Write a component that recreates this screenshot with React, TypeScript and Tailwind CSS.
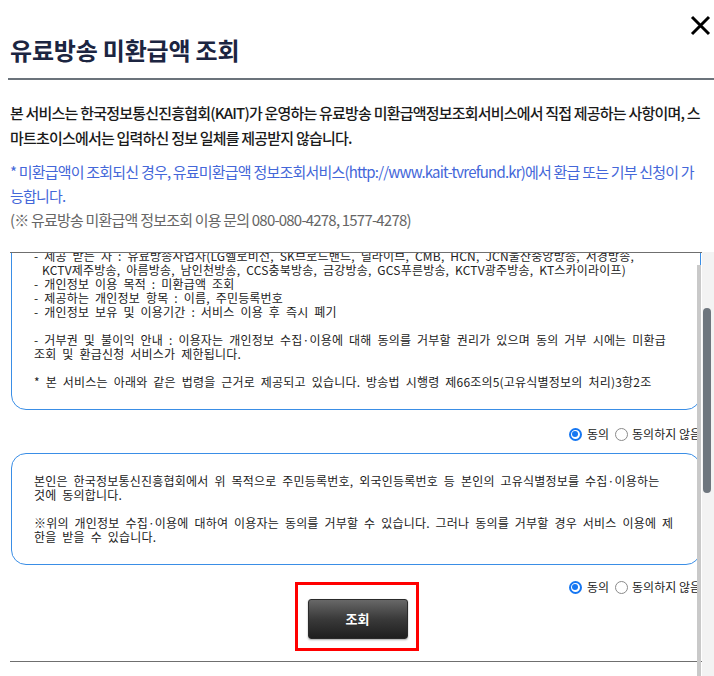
import React from "react";

const FONT = { fontFamily: '"Noto Sans CJK KR", "Noto Sans", sans-serif' };

function Radio({ checked }: { checked: boolean }) {
  if (checked) {
    return (
      <span className="flex h-[13px] w-[13px] shrink-0 items-center justify-center rounded-full border-[2px] border-[#1677f2] bg-white">
        <span className="block h-[6px] w-[6px] rounded-full bg-[#1677f2]" />
      </span>
    );
  }
  return <span className="block h-[13px] w-[13px] shrink-0 rounded-full border border-[#8a8a8a] bg-white" />;
}

function RadioRow() {
  return (
    <div className="flex h-[18px] items-center justify-end pr-[1px] text-[12px] leading-[18px] text-[#222]">
      <Radio checked />
      <span className="ml-[5px]">동의</span>
      <span className="ml-[6px] block">
        <Radio checked={false} />
      </span>
      <span className="ml-[4px]">동의하지 않음</span>
    </div>
  );
}

const boxText = "text-[12px] leading-[14px] tracking-[0.2px] text-[#222] [word-spacing:3px]";

export default function App() {
  return (
    <div className="relative h-[676px] w-[714px] overflow-hidden bg-white" style={FONT}>
      {/* Close icon */}
      <button className="absolute right-[3px] top-[14px] flex h-[22px] w-[22px] items-center justify-center" aria-label="닫기">
        <svg width="21" height="21" viewBox="0 0 21 21">
          <path d="M2 2 L19 19 M19 2 L2 19" stroke="#000" strokeWidth="3" strokeLinecap="butt" />
        </svg>
      </button>

      {/* Header */}
      <div className="ml-[8px] h-[80px] border-b-2 border-[#6b737b] pl-[2px] pt-[34px]">
        <h1 className="text-[24px] font-bold leading-[32px] tracking-[-0.2px] text-[#1c2541]">유료방송 미환급액 조회</h1>
      </div>

      {/* Intro text */}
      <div className="pl-[10px] pt-[20px] text-[15px] tracking-[-0.8px]">
        <p className="whitespace-nowrap font-medium leading-[25px] text-[#1a1a1a]">
          본 서비스는 한국정보통신진흥협회(KAIT)가 운영하는 유료방송 미환급액정보조회서비스에서 직접 제공하는 사항이며, 스
          <br />
          마트초이스에서는 입력하신 정보 일체를 제공받지 않습니다.
        </p>
        <p className="mt-[10px] whitespace-nowrap leading-[24px] text-[#4467d9]">
          * 미환급액이 조회되신 경우, 유료미환급액 정보조회서비스(http://www.kait-tvrefund.kr)에서 환급 또는 기부 신청이 가
          <br />
          능합니다.
        </p>
        <p className="whitespace-nowrap leading-[24px] text-[#666]">(※ 유료방송 미환급액 정보조회 이용 문의 080-080-4278, 1577-4278)</p>
      </div>

      {/* Scrolling body */}
      <div className="mt-[20px] flex h-[424px]">
        <div className="relative ml-[10px] w-[692px] overflow-hidden border-t border-[#6f6f6f]">
          <div className="-mt-[25px]">
            {/* Box 1 */}
            <div className={"ml-[1px] w-[690px] rounded-[15px] border border-[#3a8ee6] px-[22px] py-[20px] " + boxText}>
              <div className="whitespace-nowrap">- 제공 받는 자 : 유료방송사업자(LG헬로비전, SK브로드밴드, 딜라이브, CMB, HCN, JCN울산중앙방송, 서경방송,</div>
              <div className="whitespace-nowrap pl-[8px]">KCTV제주방송, 아름방송, 남인천방송, CCS충북방송, 금강방송, GCS푸른방송, KCTV광주방송, KT스카이라이프)</div>
              <div className="whitespace-nowrap">- 개인정보 이용 목적 : 미환급액 조회</div>
              <div className="whitespace-nowrap">- 제공하는 개인정보 항목 : 이름, 주민등록번호</div>
              <div className="whitespace-nowrap">- 개인정보 보유 및 이용기간 : 서비스 이용 후 즉시 폐기</div>
              <div className="h-[14px]" />
              <div className="whitespace-nowrap">- 거부권 및 불이익 안내 : 이용자는 개인정보 수집·이용에 대해 동의를 거부할 권리가 있으며 동의 거부 시에는 미환급</div>
              <div className="whitespace-nowrap">조회 및 환급신청 서비스가 제한됩니다.</div>
              <div className="h-[14px]" />
              <div className="whitespace-nowrap">* 본 서비스는 아래와 같은 법령을 근거로 제공되고 있습니다. 방송법 시행령 제66조의5(고유식별정보의 처리)3항2조</div>
            </div>

            <div className="mt-[15px]">
              <RadioRow />
            </div>

            {/* Box 2 */}
            <div className={"ml-[1px] mt-[10px] w-[690px] rounded-[15px] border border-[#3a8ee6] px-[22px] py-[20px] " + boxText}>
              <div className="whitespace-nowrap">본인은 한국정보통신진흥협회에서 위 목적으로 주민등록번호, 외국인등록번호 등 본인의 고유식별정보를 수집·이용하는</div>
              <div className="whitespace-nowrap">것에 동의합니다.</div>
              <div className="h-[14px]" />
              <div className="whitespace-nowrap">※위의 개인정보 수집·이용에 대하여 이용자는 동의를 거부할 수 있습니다. 그러나 동의를 거부할 경우 서비스 이용에 제</div>
              <div className="whitespace-nowrap">한을 받을 수 있습니다.</div>
            </div>

            {/* Radio + button */}
            <div className="mt-[13px] grid grid-cols-[1fr_auto_1fr] items-start">
              <div />
              <div className="ml-[1px] mt-[4px] h-[69px] w-[124px] border-[3px] border-[#ff0000] pl-[10px] pt-[14px]">
                <button className="flex h-[40px] w-[100px] items-center justify-center rounded-[3px] border border-[#2a2a2a] bg-gradient-to-b from-[#686868] via-[#3a3a3a] to-[#1f1f1f] text-[13px] font-bold text-white shadow-[0_1px_2px_rgba(0,0,0,0.35)]">
                  조회
                </button>
              </div>
              <RadioRow />
            </div>

            <div className="mt-[10px] border-t border-[#6f6f6f]" />
            <div className="h-[40px]" />
          </div>

          {/* inner scrollbar strip */}
          <div className="absolute bottom-0 right-[1px] top-[12px] w-[4px] bg-[#c9c9c9]" />
        </div>

        {/* outer scrollbar */}
        <div className="w-[12px] bg-[#f3f3f3] pt-[56px]">
          <div className="ml-[1px] h-[185px] w-[8px] rounded-full bg-[#6e767e]" />
        </div>
      </div>
    </div>
  );
}
